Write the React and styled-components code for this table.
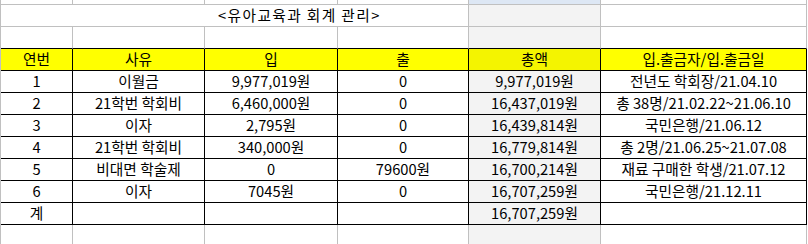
import styled, { createGlobalStyle } from "styled-components";

const GlobalStyle = createGlobalStyle`
  body {
    margin: 0;
    background: #ffffff;
    font-family: "Noto Sans CJK KR", "Noto Sans", sans-serif;
    color: #000000;
  }
`;

const GRID = "#c0c0c0";
const INK = "#000000";
const COLS = [72, 132, 133, 131, 132, 206];

const Sheet = styled.div`
  width: 808px;
  height: 244px;
  overflow: hidden;
  border-left: 1px solid ${GRID};
  box-sizing: border-box;
`;

const Row = styled.div`
  display: flex;
  height: ${(p) => p.$h || 22}px;
`;

const Cell = styled.div`
  box-sizing: border-box;
  width: ${(p) => p.$w}px;
  flex: none;
  display: flex;
  justify-content: ${(p) => (p.$left ? "flex-start" : "center")};
  align-items: flex-start;
  padding-left: ${(p) => p.$indent || 0}px;
  border-right: 1px solid ${(p) => p.$side || GRID};
  border-bottom: 1px solid ${(p) => p.$under || GRID};
  background: ${(p) => p.$bg || "transparent"};
  font-size: 14.7px;
  line-height: 19px;
  letter-spacing: ${(p) => p.$track || 0}px;
  white-space: nowrap;
`;

const colBg = (i, yellow) => {
  if (yellow) return i === 4 ? "#f4f400" : "#ffff00";
  return i === 4 ? "#f3f3f3" : "transparent";
};

const header = ["연번", "사유", "입", "출", "총액", "입.출금자/입.출금일"];

const rows = [
  ["1", "이월금", "9,977,019원", "0", "9,977,019원", "전년도 학회장/21.04.10"],
  ["2", "21학번 학회비", "6,460,000원", "0", "16,437,019원", "총 38명/21.02.22~21.06.10"],
  ["3", "이자", "2,795원", "0", "16,439,814원", "국민은행/21.06.12"],
  ["4", "21학번 학회비", "340,000원", "0", "16,779,814원", "총 2명/21.06.25~21.07.08"],
  ["5", "비대면 학술제", "0", "79600원", "16,700,214원", "재료 구매한 학생/21.07.12"],
  ["6", "이자", "7045원", "0", "16,707,259원", "국민은행/21.12.11"],
  ["계", "", "", "", "16,707,259원", ""],
];

const TableRow = ({ cells, yellow }) => (
  <Row>
    {COLS.map((w, i) => (
      <Cell key={i} $w={w} $side={INK} $under={INK} $bg={colBg(i, yellow)}>
        {cells[i]}
      </Cell>
    ))}
  </Row>
);

const PlainRow = ({ h, under, topBlue }) => (
  <Row $h={h}>
    {COLS.map((w, i) => (
      <Cell
        key={i}
        $w={w}
        $under={under}
        $bg={i === 4 ? (topBlue ? "#dde7f4" : "#f3f3f3") : "transparent"}
      />
    ))}
  </Row>
);

export default function App() {
  return (
    <>
      <GlobalStyle />
      <Sheet>
        <PlainRow h={5} topBlue />
        <Row>
          <Cell $w={468} $left $indent={217} $track={1.4}>
            &lt;유아교육과 회계 관리&gt;
          </Cell>
          <Cell $w={132} $bg="#f3f3f3" />
          <Cell $w={206} />
        </Row>
        <PlainRow under={INK} />
        <TableRow cells={header} yellow />
        {rows.map((r, i) => (
          <TableRow key={i} cells={r} />
        ))}
        <PlainRow h={21} />
      </Sheet>
    </>
  );
}
